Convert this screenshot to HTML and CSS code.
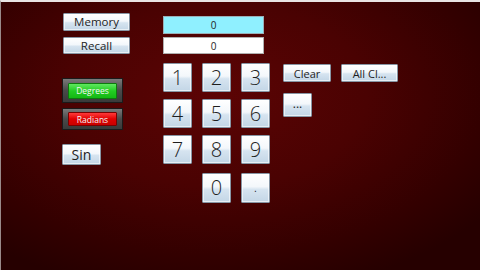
FILE: index.html
```html
<!DOCTYPE html>
<html>
<head>
<meta charset="utf-8">
<link rel="stylesheet" href="styles.css">
</head>
<body>
<div class="app">
  <div class="col-left">
    <div class="btn mem">Memory</div>
    <div class="btn mem recall">Recall</div>
    <div class="toggle deg"><div class="lamp green">Degrees</div></div>
    <div class="toggle rad"><div class="lamp red">Radians</div></div>
    <div class="btn sin">Sin</div>
  </div>
  <div class="col-mid">
    <div class="display cyan">0</div>
    <div class="display white">0</div>
    <div class="keypad">
      <div class="btn key">1</div>
      <div class="btn key">2</div>
      <div class="btn key">3</div>
      <div class="btn key">4</div>
      <div class="btn key">5</div>
      <div class="btn key">6</div>
      <div class="btn key">7</div>
      <div class="btn key">8</div>
      <div class="btn key">9</div>
      <div class="empty"></div>
      <div class="btn key">0</div>
      <div class="btn key dot">.</div>
    </div>
  </div>
  <div class="col-right">
    <div class="row">
      <div class="btn clear">Clear</div>
      <div class="btn allclear">All Cl...</div>
    </div>
    <div class="btn more">...</div>
  </div>
</div>
</body>
</html>
```
FILE: styles.css
```css
html, body {
  margin: 0;
  padding: 0;
  width: 480px;
  height: 270px;
  overflow: hidden;
}
body {
  background: radial-gradient(ellipse 70% 75% at 45% 35%, #5c0404 0%, #4a0202 45%, #330000 80%, #260000 100%);
  border-top: 2px solid #e9e4e4;
  border-left: 1px solid #9a8a8a;
  box-sizing: border-box;
  font-family: "Open Sans", "DejaVu Sans", sans-serif;
  color: #1e1e1e;
}
.app {
  display: flex;
  align-items: flex-start;
  padding: 11px 0 0 61px;
}
.btn {
  box-sizing: border-box;
  display: flex;
  align-items: center;
  justify-content: center;
  background: linear-gradient(#ffffff 0%, #f3f7fb 45%, #d6e4f0 55%, #c3d6e6 100%);
  border: 1px solid #8796a5;
  border-radius: 1px;
  box-shadow: inset 0 0 0 1px rgba(255,255,255,0.6);
  line-height: 1;
}
.col-left {
  width: 68px;
  display: flex;
  flex-direction: column;
  align-items: flex-start;
}
.mem {
  margin-left: 1px;
  width: 67px;
  height: 18px;
  font-size: 11.5px;
}
.recall {
  margin-top: 6px;
  height: 17px;
}
.toggle {
  box-sizing: border-box;
  width: 61px;
  display: flex;
  align-items: center;
  justify-content: center;
  background: linear-gradient(#7a7a7a, #4a4a4a 50%, #3a3a3a);
  border: 1px solid #1a1a1a;
}
.deg {
  margin-top: 24px;
  height: 25px;
}
.rad {
  margin-top: 5px;
  height: 22px;
}
.lamp {
  box-sizing: border-box;
  width: 49px;
  display: flex;
  align-items: center;
  justify-content: center;
  color: #f4f4f4;
  font-size: 8.5px;
  border-radius: 1px;
}
.deg .lamp { height: 16px; }
.rad .lamp { height: 14px; }
.green {
  background: linear-gradient(#5fe85f, #22cc22 50%, #14b814);
  border: 1px solid #0d7a0d;
}
.red {
  background: linear-gradient(#ff3a3a, #e00000 50%, #c80000);
  border: 1px solid #7a0000;
}
.sin {
  margin-top: 14px;
  width: 39px;
  height: 21px;
  font-size: 14px;
}
.col-mid {
  margin-left: 33px;
  padding-top: 3px;
  display: flex;
  flex-direction: column;
}
.display {
  box-sizing: border-box;
  width: 101px;
  display: flex;
  align-items: center;
  justify-content: center;
  font-size: 10px;
  border: 1px solid #9ab0b8;
}
.cyan {
  height: 18px;
  background: #8ff0ff;
}
.white {
  margin-top: 3px;
  height: 17px;
  background: #ffffff;
  border-color: #b0b0b0;
}
.keypad {
  margin-top: 9px;
  display: grid;
  grid-template-columns: 29px 29px 29px;
  grid-auto-rows: 29px;
  column-gap: 10px;
  row-gap: 7px;
}
.key {
  font-size: 20px;
  font-weight: 300;
}
.keypad .key:nth-child(n+10) { margin-top: 2px; height: 30px; }
.dot {
  align-items: flex-end;
  padding-bottom: 8px;
  font-size: 14px;
}
.col-right {
  margin-left: 13px;
  padding-top: 51px;
  display: flex;
  flex-direction: column;
  align-items: flex-start;
}
.row {
  display: flex;
  gap: 10px;
}
.clear {
  width: 48px;
  height: 18px;
  font-size: 11px;
}
.allclear {
  width: 57px;
  height: 18px;
  font-size: 11px;
}
.more {
  margin-top: 11px;
  width: 29px;
  height: 24px;
  font-size: 12px;
  align-items: flex-end;
  padding-bottom: 6px;
}
```
